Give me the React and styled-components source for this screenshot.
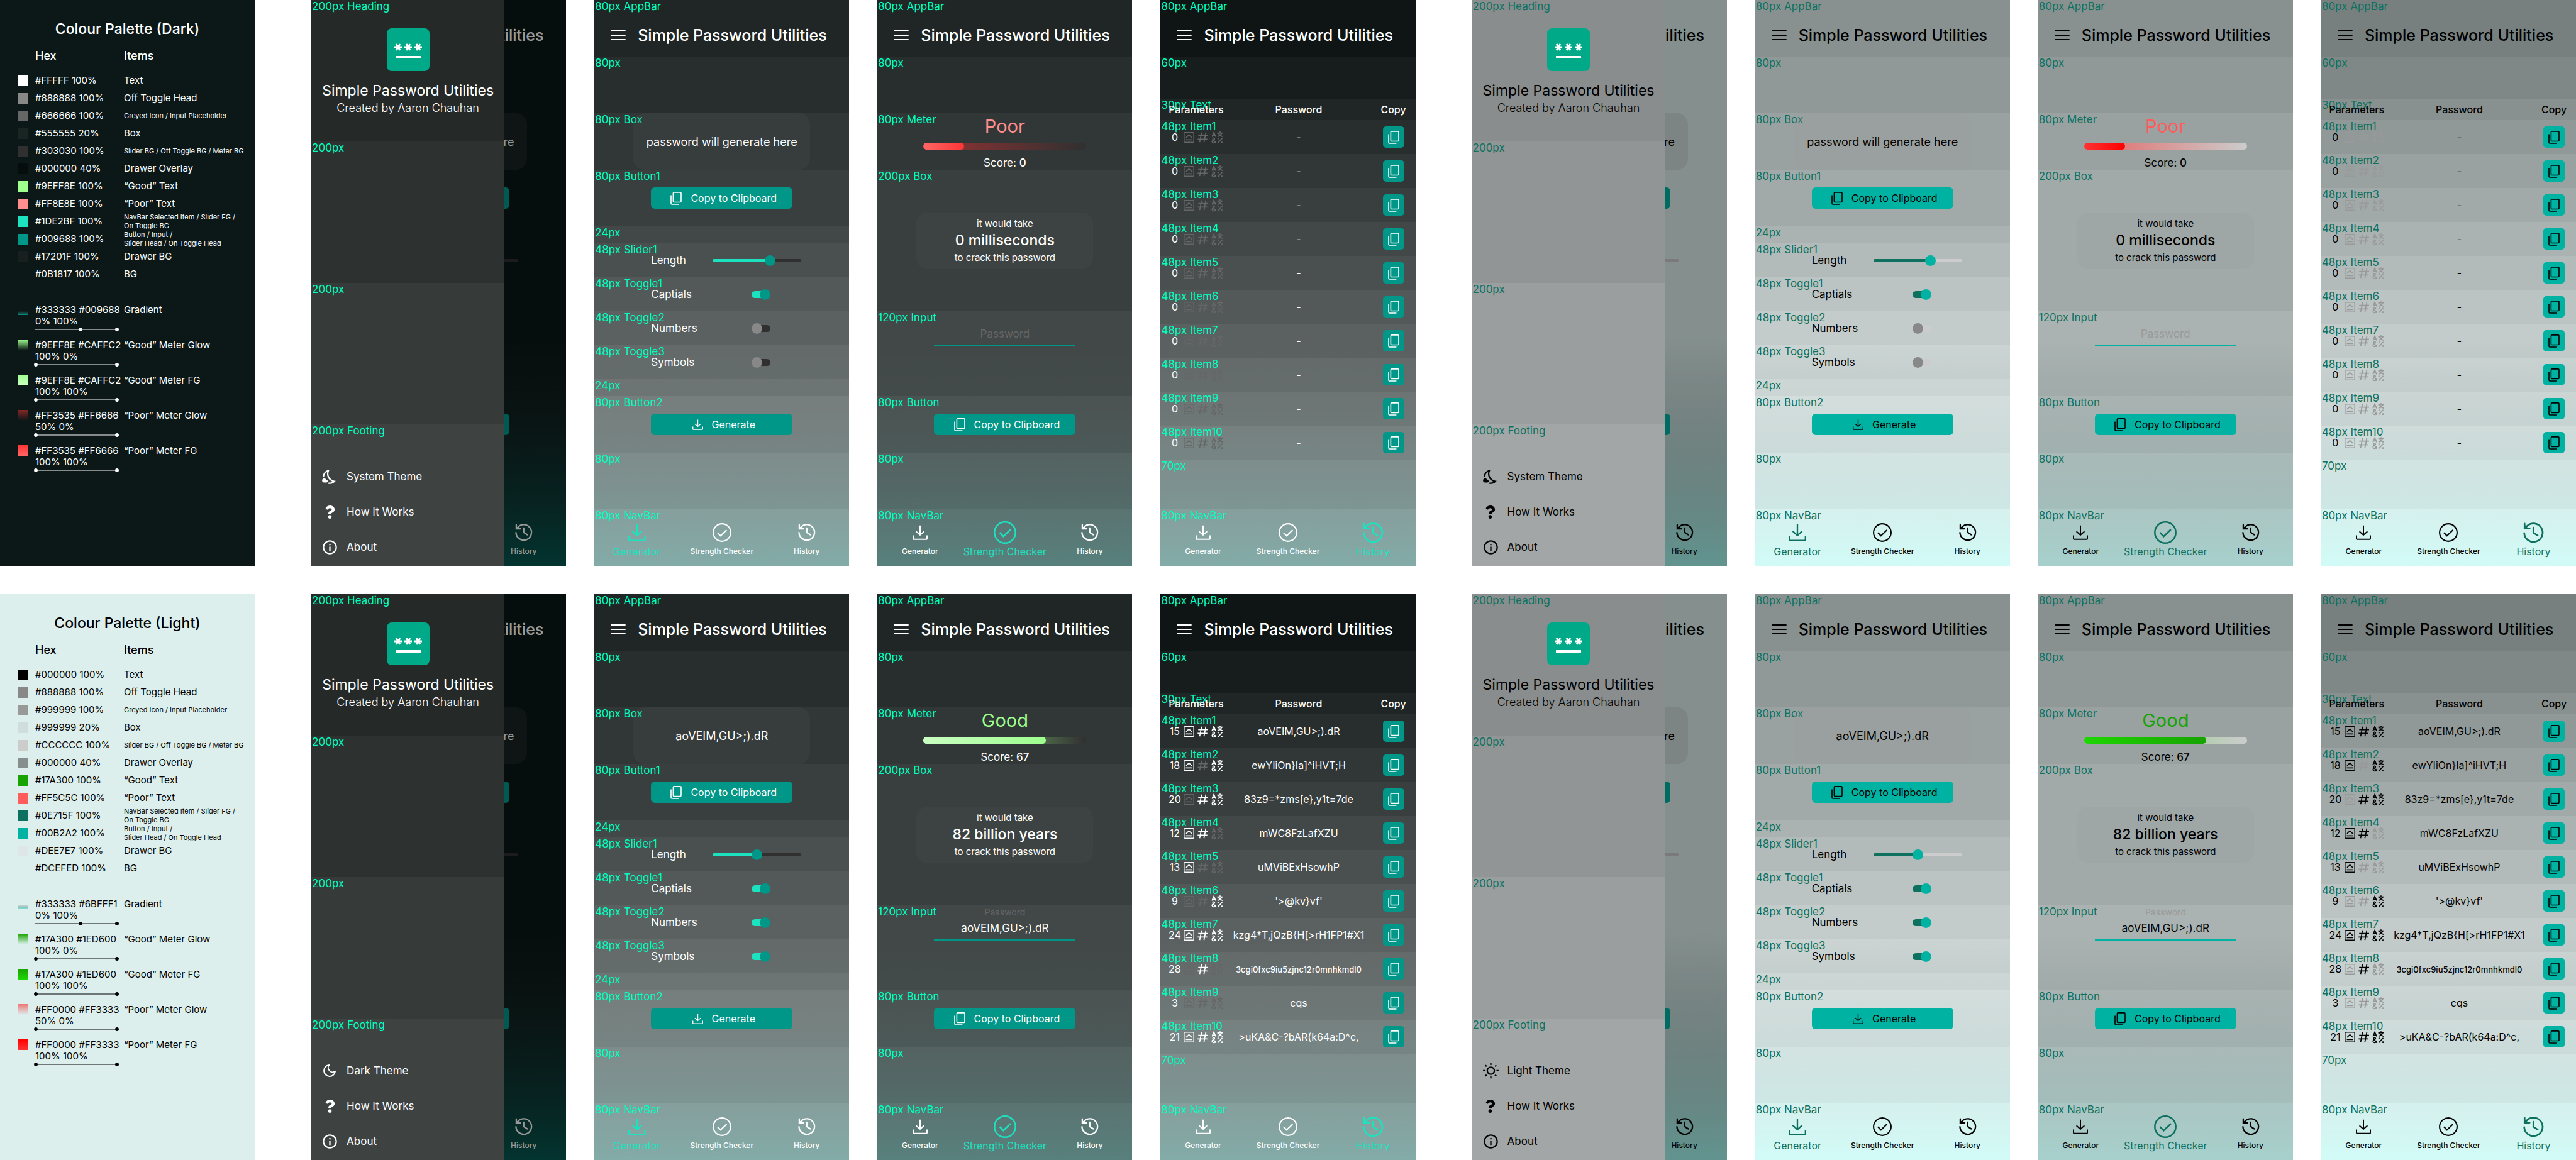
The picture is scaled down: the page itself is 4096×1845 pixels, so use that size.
import React, { useId, useState } from "react";
import styled, { createGlobalStyle, ThemeProvider, css } from "styled-components";
import { MdInfoOutline, MdOutlineNightsStay, MdOutlineWbSunny } from "react-icons/md";
import { FaQuestion } from "react-icons/fa";
import { FiMoon } from "react-icons/fi";

/* ---------- themes ---------- */

const dark = {
  bg: "#0b1817",
  drawer: "#17201f",
  text: "#ffffff",
  offHead: "#888888",
  grey: "#666666",
  box: "rgba(85, 85, 85, 0.2)",
  track: "#303030",
  good: "#9eff8e",
  poor: "#ff8e8e",
  selected: "#1de2bf",
  accent: "#009688",
  note: "#00ffc0",
  fade: [[51, 51, 51], [0, 150, 136]],
  meter: {
    Good: { fg: ["#caffc2", "#9eff8e"], glow: [[158, 255, 142, 1], [202, 255, 194, 0]] },
    Poor: { fg: ["#ff6666", "#ff3535"], glow: [[255, 53, 53, 0.5], [255, 102, 102, 0]] },
  },
};

const light = {
  bg: "#dcefed",
  drawer: "#dee7e7",
  text: "#000000",
  offHead: "#888888",
  grey: "#999999",
  box: "rgba(153, 153, 153, 0.2)",
  track: "#cccccc",
  good: "#17a300",
  poor: "#ff5c5c",
  selected: "#0e715f",
  accent: "#00b2a2",
  note: "#0e715f",
  fade: [[51, 51, 51], [107, 255, 241]],
  meter: {
    Good: { fg: ["#1ed600", "#17a300"], glow: [[23, 163, 0, 1], [30, 214, 0, 0]], soft: [[30, 214, 0, 0.5], [30, 214, 0, 0]] },
    Poor: { fg: ["#ff3333", "#ff0000"], glow: [[255, 0, 0, 0.5], [255, 51, 51, 0]] },
  },
};

/* A vertical fade whose colour and alpha are blended separately. */
const fade = ([from, to], start, strength) => {
  const stops = [];
  for (let i = 0; i <= 10; i += 1) {
    const t = i / 10;
    const rgb = from.map((c, k) => Math.round(c + (to[k] - c) * t));
    stops.push(`rgba(${rgb.join(", ")}, ${(t * strength).toFixed(3)}) ${Math.round((start + (1 - start) * t) * 100)}%`);
  }
  return `linear-gradient(to bottom, ${stops.join(", ")})`;
};

const glow = ([a, b], to = "right") =>
  `linear-gradient(to ${to}, rgba(${a.join(", ")}), rgba(${b.join(", ")}))`;

const GlobalStyle = createGlobalStyle`
  *, *::before, *::after { box-sizing: border-box; }
  body { margin: 0; background: #ffffff; font-family: Inter, Roboto, sans-serif; }
  button, input { font: inherit; color: inherit; }
`;

/* ---------- board ---------- */

const Board = styled.main`
  display: flex;
  flex-direction: column;
  gap: 45px;
`;

const BoardRow = styled.section`
  display: flex;
  gap: 90px;
`;

const Group = styled.div`
  flex: 4 4 135px;
  min-width: 0;
  display: grid;
  grid-template-columns: repeat(4, minmax(0, 1fr));
  gap: 45px;
`;

/* ---------- icons ---------- */

const Glyph = styled.svg`
  display: block;
  flex: none;
  fill: none;
  stroke: currentColor;
  overflow: visible;
`;

const CopyIcon = () => (
  <Glyph width="18" height="21" viewBox="0 0 18 21" strokeWidth="1.6" aria-hidden="true">
    <rect x="4.4" y="0.9" width="12.6" height="15.6" rx="1.2" />
    <path d="M1 5.6V18.6a1.4 1.4 0 0 0 1.4 1.4H13.4" />
  </Glyph>
);

const DownloadIcon = ({ size = 24 }) => (
  <Glyph width={size} height={size} viewBox="0 0 24 24" strokeWidth="2" aria-hidden="true">
    <path d="M12 0.8V16M5.6 10.2L12 16l6.4-5.8" />
    <path d="M1 16.4v4.8a1.6 1.6 0 0 0 1.6 1.6h18.8a1.6 1.6 0 0 0 1.6-1.6v-4.8" />
  </Glyph>
);

const CheckIcon = ({ size = 30 }) => (
  <Glyph width={size} height={size} viewBox="0 0 30 30" strokeWidth="2.1" aria-hidden="true">
    <circle cx="15" cy="15" r="13.9" />
    <path d="M8 15.2l4.8 5 9.6-9.2" />
  </Glyph>
);

const HistoryIcon = ({ size = 27 }) => (
  <Glyph width={size} height={size} viewBox="1.5 1.5 21 21" strokeWidth="1.8" strokeLinecap="round" aria-hidden="true">
    <path d="M2.6 12.5a9.6 9.6 0 1 0 2.6-6.9L3.4 7.4M3 2.8v5h5.2M12.2 6.8v5.4l4.4 2.9" />
  </Glyph>
);

const MenuIcon = () => (
  <Glyph width="24" height="16" viewBox="0 0 24 16" strokeWidth="1.8" strokeLinecap="round" aria-hidden="true">
    <path d="M1 1h22M1 8h22M1 15h22" />
  </Glyph>
);

const CapsIcon = () => (
  <Glyph width="17" height="17" viewBox="0 0 24 24" strokeWidth="2.2" aria-hidden="true">
    <rect x="1.1" y="1.1" width="21.8" height="21.8" rx="1.4" />
    <path d="M5.6 12.6L12 6.6l6.4 6M5 17.5h14" />
  </Glyph>
);

const HashIcon = () => (
  <Glyph width="17" height="17" viewBox="0 0 24 24" strokeWidth="2.4" aria-hidden="true">
    <path d="M9.4 1L5 23M19 1l-4.4 22M1.8 8H24M0.4 16h21.8" />
  </Glyph>
);

const SymbolsIcon = () => (
  <Glyph width="19" height="19" viewBox="0 0 98 102" strokeWidth="9" aria-hidden="true">
    <path d="M4 45L20 9l16 36M10 34h20" />
    <path d="M49 14h48M73 1v12M61 17c5 13 17 23 35 27M86 17c-6 14-19 23-35 27" />
    <path d="M39 100L13 70c-6-8 0-14 6-14 9 0 10 9 3 14C4 78 2 86 7 93c8 10 26 6 31-12" />
    <path d="M54 99l38-41" />
    <circle cx="57" cy="61" r="2" />
    <circle cx="90" cy="95" r="3" />
  </Glyph>
);

const LogoTile = styled.svg`
  display: block;
  width: 68px;
  height: 68px;
`;

const Logo = () => (
  <LogoTile viewBox="0 0 68 68" role="img" aria-label="Simple Password Utilities logo">
    <rect width="68" height="68" rx="8" fill="#00aa88" />
    {[18, 34, 50].map((x) => (
      <path key={x} d={`M${x - 6} 30h12M${x - 3} 25l6 10M${x + 3} 25l-6 10`} stroke="#ffffff" strokeWidth="3" />
    ))}
    <path d="M14 46h40" stroke="#ffffff" strokeWidth="4" />
  </LogoTile>
);

/* ---------- palette ---------- */

const PaletteCard = styled.article`
  flex: 1 1 0;
  min-width: 0;
  min-height: 900px;
  padding-top: 31px;
  background: ${(p) => p.theme.bg};
  color: ${(p) => p.theme.text};
`;

const PaletteTitle = styled.h2`
  margin: 0 0 17px;
  font-size: 23px;
  font-weight: 500;
  line-height: 31px;
  text-align: center;
`;

const PaletteTable = styled.table`
  width: 100%;
  table-layout: fixed;
  border-collapse: collapse;
  font-size: 15px;
  line-height: 18px;
  text-align: left;
  white-space: nowrap;

  th {
    height: 35px;
    padding: 0;
    font-size: 18px;
    font-weight: 500;
    line-height: 20px;
    vertical-align: top;
  }
  td { padding: 0; }
  th:first-child, td:first-child { width: 56px; padding-left: 28px; }
  th:nth-child(2) { width: 141px; }
`;

const SolidRow = styled.tr`
  height: 28px;
`;

const BlendRow = styled.tr`
  height: 56px;
  vertical-align: top;
`;

const Spacer = styled.tr`
  height: 34px;
`;

const Swatch = styled.div`
  width: 17px;
  height: 17px;
  background: ${(p) => p.$fill};
`;

const ItemName = styled.div`
  font-size: ${(p) => (p.$small ? "11px" : "15px")};
  line-height: ${(p) => (p.$small ? "14px" : "18px")};
  white-space: pre-line;
`;

const StopLine = ({ from }) => (
  <Glyph width="133" height="8" viewBox="0 0 133 8" aria-hidden="true">
    <path d="M0 4h133" />
    <circle cx={from} cy="4" r="2.9" fill="currentColor" stroke="none" />
    <circle cx="130" cy="4" r="2.9" fill="currentColor" stroke="none" />
  </Glyph>
);

const darkSolids = [
  ["#FFFFF 100%", "#ffffff", "Text"],
  ["#888888 100%", "#888888", "Off Toggle Head"],
  ["#666666 100%", "#666666", "Greyed Icon / Input Placeholder", true],
  ["#555555 20%", dark.box, "Box"],
  ["#303030 100%", "#303030", "Slider BG / Off Toggle BG / Meter BG", true],
  ["#000000 40%", "rgba(0, 0, 0, 0.4)", "Drawer Overlay"],
  ["#9EFF8E 100%", "#9eff8e", "“Good” Text"],
  ["#FF8E8E 100%", "#ff8e8e", "“Poor” Text"],
  ["#1DE2BF 100%", "#1de2bf", "NavBar Selected Item / Slider FG /\nOn Toggle BG", true],
  ["#009688 100%", "#009688", "Button / Input /\nSlider Head / On Toggle Head", true],
  ["#17201F 100%", "#17201f", "Drawer BG"],
  ["#0B1817 100%", "#0b1817", "BG"],
];

const lightSolids = [
  ["#000000 100%", "#000000", "Text"],
  ["#888888 100%", "#888888", "Off Toggle Head"],
  ["#999999 100%", "#999999", "Greyed Icon / Input Placeholder", true],
  ["#999999 20%", light.box, "Box"],
  ["#CCCCCC 100%", "#cccccc", "Slider BG / Off Toggle BG / Meter BG", true],
  ["#000000 40%", "rgba(0, 0, 0, 0.4)", "Drawer Overlay"],
  ["#17A300 100%", "#17a300", "“Good” Text"],
  ["#FF5C5C 100%", "#ff5c5c", "“Poor” Text"],
  ["#0E715F 100%", "#0e715f", "NavBar Selected Item / Slider FG /\nOn Toggle BG", true],
  ["#00B2A2 100%", "#00b2a2", "Button / Input /\nSlider Head / On Toggle Head", true],
  ["#DEE7E7 100%", "#dee7e7", "Drawer BG"],
  ["#DCEFED 100%", "#dcefed", "BG"],
];

const blends = (theme, names) => [
  [names[0], "0% 100%", fade(theme.fade, 0.6, 1), "Gradient", 72],
  [names[1], "100% 0%", glow(theme.meter.Good.glow, "bottom"), "“Good” Meter Glow", 1],
  [names[1], "100% 100%", `linear-gradient(to top, ${theme.meter.Good.fg.join(", ")})`, "“Good” Meter FG", 1],
  [names[2], "50% 0%", glow(theme.meter.Poor.glow, "bottom"), "“Poor” Meter Glow", 1],
  [names[2], "100% 100%", `linear-gradient(to top, ${theme.meter.Poor.fg.join(", ")})`, "“Poor” Meter FG", 1],
];

const darkBlends = blends(dark, ["#333333 #009688", "#9EFF8E #CAFFC2", "#FF3535 #FF6666"]);
const lightBlends = blends(light, ["#333333 #6BFFF1", "#17A300 #1ED600", "#FF0000 #FF3333"]);

const Palette = ({ title, solids, gradients }) => (
  <PaletteCard>
    <PaletteTitle>{title}</PaletteTitle>
    <PaletteTable>
      <thead>
        <tr><th aria-label="Swatch" /><th>Hex</th><th>Items</th></tr>
      </thead>
      <tbody>
        {solids.map(([hex, fill, name, small]) => (
          <SolidRow key={name}>
            <td><Swatch $fill={fill} /></td>
            <td>{hex}</td>
            <td><ItemName $small={small}>{name}</ItemName></td>
          </SolidRow>
        ))}
        <Spacer><td colSpan={3} /></Spacer>
        {gradients.map(([hex, alpha, fill, name, from]) => (
          <BlendRow key={name}>
            <td><Swatch $fill={fill} /></td>
            <td>{hex}<br />{alpha}<StopLine from={from} /></td>
            <td><ItemName>{name}</ItemName></td>
          </BlendRow>
        ))}
      </tbody>
    </PaletteTable>
  </PaletteCard>
);

/* ---------- screen and bands ---------- */

const Screen = styled.article`
  position: relative;
  min-width: 0;
  overflow: hidden;
  display: flex;
  flex-direction: column;
  background: ${(p) => fade(p.theme.fade, 0.6, 0.5)}, ${(p) => p.theme.bg};
  color: ${(p) => p.theme.text};
`;

const tint = css`
  background: ${(p) => (p.$tone === undefined ? "none" : `rgba(${p.$tone * 17}, ${p.$tone * 17}, ${p.$tone * 17}, 0.5)`)};
`;

const BandBox = styled.section`
  isolation: isolate;
  position: relative;
  flex: none;
  display: flex;
  flex-direction: column;
  align-items: center;
  justify-content: center;
  min-height: ${(p) => p.$height}px;
  ${tint}
`;

const Note = styled.span`
  position: absolute;
  z-index: -1;
  top: 0;
  left: 1px;
  font-size: 17px;
  font-weight: 400;
  line-height: 20px;
  white-space: nowrap;
  color: ${(p) => p.theme.note};
`;

const Band = ({ size, tone, note, children, as }) => (
  <BandBox as={as} $height={size} $tone={tone}>
    {tone !== undefined && <Note>{note}</Note>}
    {children}
  </BandBox>
);

/* ---------- app bar and nav bar ---------- */

const BarRow = styled.div`
  align-self: stretch;
  display: flex;
  align-items: center;
  gap: 19px;
  padding: 22px 26px 0;
`;

const MenuButton = styled.button`
  display: block;
  padding: 0;
  border: 0;
  background: none;
`;

const BarTitle = styled.h1`
  margin: 0;
  font-size: 25px;
  font-weight: 500;
  line-height: 30px;
  white-space: nowrap;
`;

const AppBar = ({ tone }) => (
  <Band as="header" size={90} tone={tone} note="80px AppBar">
    <BarRow>
      <MenuButton type="button" aria-label="Open menu"><MenuIcon /></MenuButton>
      <BarTitle>Simple Password Utilities</BarTitle>
    </BarRow>
  </Band>
);

const NavList = styled.nav`
  align-self: stretch;
  display: grid;
  grid-template-columns: repeat(3, minmax(0, 1fr));
  padding-top: 3px;
`;

const NavLink = styled.a`
  display: flex;
  flex-direction: column;
  align-items: center;
  color: ${(p) => (p.$on ? p.theme.selected : "inherit")};
  font-size: ${(p) => (p.$on ? "16px" : "12px")};
  font-weight: ${(p) => (p.$on ? 400 : 500)};
  line-height: 20px;
  text-decoration: none;
  white-space: nowrap;
`;

const NavIcon = styled.span`
  display: grid;
  place-items: center;
  height: 41px;
`;

const navItems = [
  ["Generator", DownloadIcon, 24, 28],
  ["Strength Checker", CheckIcon, 30, 36],
  ["History", HistoryIcon, 27, 32],
];

/* Items that lie under an open drawer keep their column but are not rendered. */
const NavBar = ({ tone, active, covered = 0 }) => (
  <Band as="footer" size={90} tone={tone} note="80px NavBar">
    <NavList>
      {navItems.map(([name, Icon, size, big], i) => {
        const on = name === active;
        if (i < covered) return <span key={name} />;
        return (
          <NavLink key={name} href={`#${name.toLowerCase().replace(" ", "-")}`} $on={on}>
            <NavIcon><Icon size={on ? big : size} /></NavIcon>
            {name}
          </NavLink>
        );
      })}
    </NavList>
  </Band>
);

/* ---------- shared controls ---------- */

const InfoBox = styled.div`
  width: 281px;
  max-width: 100%;
  min-height: 90px;
  display: flex;
  flex-direction: column;
  align-items: center;
  justify-content: center;
  border-radius: 18px;
  background: ${(p) => p.theme.box};
  font-size: ${(p) => (p.$small ? "15px" : "18px")};
  line-height: 27px;
  white-space: nowrap;

  strong { font-size: 23px; font-weight: 500; }
`;

const ActionButton = styled.button`
  width: 225px;
  max-width: 100%;
  height: 34px;
  display: flex;
  align-items: center;
  justify-content: center;
  gap: 14px;
  padding: 0 0 0 6px;
  border: 0;
  border-radius: 6px;
  background: ${(p) => p.theme.accent};
  font-size: 16px;
  line-height: 20px;
`;

/* ---------- generator ---------- */

const Setting = styled.div`
  align-self: stretch;
  display: flex;
  align-items: center;
  justify-content: space-between;
  padding-left: 90px;
  padding-right: ${(p) => (p.$wide ? "76px" : "125px")};
  font-size: 17px;
  line-height: 20px;
`;

const Slider = styled.input`
  appearance: none;
  width: 141px;
  height: 5px;
  margin: 0;
  border-radius: 3px;
  background: linear-gradient(
    to right,
    ${(p) => p.theme.selected} ${(p) => p.$share}%,
    ${(p) => p.theme.track} ${(p) => p.$share}%
  );

  &::-webkit-slider-thumb {
    appearance: none;
    width: 17px;
    height: 17px;
    border-radius: 50%;
    background: ${(p) => p.theme.accent};
  }
`;

const Toggle = styled.input`
  appearance: none;
  display: flex;
  align-items: center;
  width: 30px;
  height: 11px;
  margin: 0;
  border-radius: 6px;
  background: ${(p) => p.theme.track};

  &::before {
    content: "";
    width: 17px;
    height: 17px;
    border-radius: 50%;
    background: ${(p) => p.theme.offHead};
  }
  &:checked { justify-content: flex-end; background: ${(p) => p.theme.selected}; }
  &:checked::before { background: ${(p) => p.theme.accent}; }
`;

const LengthSetting = ({ start }) => {
  const id = useId();
  const [length, setLength] = useState(start);
  return (
    <Setting $wide>
      <label htmlFor={id}>Length</label>
      <Slider
        id={id}
        type="range"
        min="0"
        max="30"
        value={length}
        $share={Math.round((length / 30) * 100)}
        onChange={(e) => setLength(Number(e.target.value))}
      />
    </Setting>
  );
};

const ToggleSetting = ({ name, on }) => {
  const id = useId();
  return (
    <Setting>
      <label htmlFor={id}>{name}</label>
      <Toggle id={id} type="checkbox" defaultChecked={on} />
    </Setting>
  );
};

const Generator = ({ filled, plain, active, children }) => {
  const tone = (n) => (plain ? undefined : n);
  return (
    <Screen>
      <AppBar tone={tone(3)} />
      <Band size={90} tone={tone(4)} note="80px" />
      <Band size={90} tone={tone(5)} note="80px Box">
        <InfoBox>{filled ? "aoVEIM,GU>;).dR" : "password will generate here"}</InfoBox>
      </Band>
      <Band size={90} tone={tone(6)} note="80px Button1">
        <ActionButton type="button"><CopyIcon />Copy to Clipboard</ActionButton>
      </Band>
      <Band size={27} tone={tone(7)} note="24px" />
      <Band size={54} tone={tone(8)} note="48px Slider1"><LengthSetting start={filled ? 15 : 20} /></Band>
      <Band size={54} tone={tone(9)} note="48px Toggle1"><ToggleSetting name="Captials" on /></Band>
      <Band size={54} tone={tone(10)} note="48px Toggle2"><ToggleSetting name="Numbers" on={filled} /></Band>
      <Band size={54} tone={tone(11)} note="48px Toggle3"><ToggleSetting name="Symbols" on={filled} /></Band>
      <Band size={27} tone={tone(12)} note="24px" />
      <Band size={90} tone={tone(13)} note="80px Button2">
        <ActionButton type="button"><DownloadIcon size={17} />Generate</ActionButton>
      </Band>
      <Band size={90} tone={tone(14)} note="80px" />
      <NavBar tone={tone(15)} active={active} covered={plain ? 2 : 0} />
      {children}
    </Screen>
  );
};

/* ---------- drawer ---------- */

const Overlay = styled.div`
  position: absolute;
  inset: 0;
  background: rgba(0, 0, 0, 0.4);
`;

const DrawerPanel = styled.aside`
  position: absolute;
  top: 0;
  bottom: 0;
  left: 0;
  width: 307px;
  display: flex;
  flex-direction: column;
  background: ${(p) => p.theme.drawer};
`;

const DrawerHead = styled.div`
  display: flex;
  flex-direction: column;
  align-items: center;
  padding-top: 5px;
  white-space: nowrap;
`;

const DrawerTitle = styled.h2`
  margin: 17px 0 0;
  font-size: 23px;
  font-weight: 400;
  line-height: 28px;
`;

const DrawerCredit = styled.p`
  margin: 0;
  font-size: 18px;
  font-weight: 300;
  line-height: 28px;
`;

const DrawerMenu = styled.ul`
  align-self: stretch;
  margin: 0;
  padding: 53px 0 0 16px;
  list-style: none;
`;

const DrawerLink = styled.a`
  display: flex;
  align-items: center;
  gap: 14px;
  height: 56px;
  color: inherit;
  font-size: 17px;
  line-height: 20px;
  text-decoration: none;
`;

const DrawerIcon = styled.span`
  width: 26px;
  display: grid;
  place-items: center;
`;

const themeIcons = {
  "System Theme": <MdOutlineNightsStay size={27} />,
  "Dark Theme": <FiMoon size={24} />,
  "Light Theme": <MdOutlineWbSunny size={27} />,
};

const DrawerScreen = ({ themeName }) => (
  <Generator plain>
    <Overlay />
    <DrawerPanel>
      <Band size={225} tone={3} note="200px Heading">
        <DrawerHead>
          <Logo />
          <DrawerTitle>Simple Password Utilities</DrawerTitle>
          <DrawerCredit>Created by Aaron Chauhan</DrawerCredit>
        </DrawerHead>
      </Band>
      <Band size={225} tone={4} note="200px" />
      <Band size={225} tone={5} note="200px" />
      <Band size={225} tone={6} note="200px Footing">
        <DrawerMenu>
          <li><DrawerLink href="#theme"><DrawerIcon>{themeIcons[themeName]}</DrawerIcon>{themeName}</DrawerLink></li>
          <li><DrawerLink href="#how"><DrawerIcon><FaQuestion size={21} /></DrawerIcon>How It Works</DrawerLink></li>
          <li><DrawerLink href="#about"><DrawerIcon><MdInfoOutline size={27} /></DrawerIcon>About</DrawerLink></li>
        </DrawerMenu>
      </Band>
    </DrawerPanel>
  </Generator>
);

/* ---------- strength checker ---------- */

const MeterBlock = styled.div`
  display: flex;
  flex-direction: column;
  align-items: center;
  width: 259px;
  max-width: 100%;
  padding-top: 3px;
`;

const Verdict = styled.div`
  margin-bottom: 8px;
  color: ${(p) => (p.$good ? p.theme.good : p.theme.poor)};
  font-size: 29px;
  line-height: 36px;
`;

const MeterTrack = styled.div`
  width: 100%;
  height: 11px;
  margin-bottom: 10px;
  overflow: hidden;
  border-radius: 6px;
  background: ${(p) => glow(p.theme.meter[p.$level].soft || p.theme.meter[p.$level].glow)}, ${(p) => p.theme.track};
`;

const MeterFill = styled.div`
  width: ${(p) => p.$share}%;
  height: 100%;
  border-radius: 6px;
  background: linear-gradient(to right, ${(p) => p.theme.meter[p.$level].fg.join(", ")});
`;

const Score = styled.div`
  font-size: 17px;
  line-height: 22px;

  strong { font-weight: 500; }
`;

const Field = styled.div`
  align-self: stretch;
  flex: 1;
  display: flex;
  flex-direction: column;
  align-items: center;
`;

const FieldLabel = styled.label`
  visibility: ${(p) => (p.$shown ? "visible" : "hidden")};
  color: ${(p) => p.theme.grey};
  font-size: 14px;
  line-height: 22px;
`;

const FieldInput = styled.input`
  width: 225px;
  max-width: 100%;
  height: 34px;
  padding: 0 0 4px;
  border: 0;
  border-bottom: 2px solid ${(p) => p.theme.accent};
  border-radius: 0;
  background: none;
  font-size: 17px;
  text-align: center;

  &::placeholder { color: ${(p) => p.theme.grey}; opacity: 1; }
`;

const PasswordField = ({ start }) => {
  const id = useId();
  const [value, setValue] = useState(start);
  return (
    <Field>
      <FieldLabel htmlFor={id} $shown={value !== ""}>Password</FieldLabel>
      <FieldInput id={id} type="text" placeholder="Password" value={value} onChange={(e) => setValue(e.target.value)} />
    </Field>
  );
};

const Strength = ({ filled }) => {
  const level = filled ? "Good" : "Poor";
  return (
    <Screen>
      <AppBar tone={3} />
      <Band size={90} tone={4} note="80px" />
      <Band size={90} tone={5} note="80px Meter">
        <MeterBlock>
          <Verdict $good={filled}>{level}</Verdict>
          <MeterTrack $level={level}><MeterFill $level={level} $share={filled ? 75 : 25} /></MeterTrack>
          <Score>Score: <strong>{filled ? 67 : 0}</strong></Score>
        </MeterBlock>
      </Band>
      <Band size={225} tone={6} note="200px Box">
        <InfoBox $small>
          <span>it would take</span>
          <strong>{filled ? "82 billion years" : "0 milliseconds"}</strong>
          <span>to crack this password</span>
        </InfoBox>
      </Band>
      <Band size={135} tone={7} note="120px Input"><PasswordField start={filled ? "aoVEIM,GU>;).dR" : ""} /></Band>
      <Band size={90} tone={8} note="80px Button">
        <ActionButton type="button"><CopyIcon />Copy to Clipboard</ActionButton>
      </Band>
      <Band size={90} tone={9} note="80px" />
      <NavBar tone={10} active="Strength Checker" />
    </Screen>
  );
};

/* ---------- history ---------- */

const HistoryTable = styled.table`
  width: 100%;
  table-layout: fixed;
  border-collapse: collapse;
  font-size: 16px;
  line-height: 20px;
  text-align: center;
  white-space: nowrap;

  th, td { padding: 0; font-weight: 400; }
  th { font-weight: 500; }
  th:first-child { width: 104px; }
  th:last-child { width: 70px; }
`;

const HistoryRow = styled.tr`
  height: ${(p) => p.$height}px;
  ${tint}

  > :first-child { isolation: isolate; position: relative; padding-left: 9px; }
`;

const Params = styled.div`
  display: flex;
  align-items: center;
  gap: 5px;
`;

const Count = styled.span`
  width: 27px;
  margin-right: -4px;
`;

const Flag = styled.span`
  color: ${(p) => (p.$on ? "inherit" : p.theme.grey)};
`;

const Entry = styled.span`
  font-size: ${(p) => (p.$long ? "13px" : "16px")};
  font-weight: ${(p) => (p.$long ? 500 : 400)};
`;

const CopyCell = styled.td`
  > button { margin: 0 auto; }
`;

const CopyButton = styled.button`
  display: grid;
  place-items: center;
  width: 34px;
  height: 34px;
  padding: 0;
  border: 0;
  border-radius: 5px;
  background: ${(p) => p.theme.accent};
`;

const filledEntries = [
  [15, "111", "aoVEIM,GU>;).dR"],
  [18, "101", "ewYIiOn}Ia]^iHVT;H"],
  [20, "011", "83z9=*zms[e},y1t=7de"],
  [12, "110", "mWC8FzLafXZU"],
  [13, "100", "uMViBExHsowhP"],
  [9, "001", "'>@kv}vf'"],
  [24, "111", "kzg4*T,jQzB{H[>rH1FP1#X1"],
  [28, "010", "3cgi0fxc9iu5zjnc12r0mnhkmdl0"],
  [3, "000", "cqs"],
  [21, "111", ">uKA&C-?bAR(k64a:D^c,"],
];
const emptyEntries = filledEntries.map(() => [0, "000", "-"]);

const History = ({ filled }) => (
  <Screen>
    <AppBar tone={1} />
    <Band size={67} tone={2} note="60px" />
    <HistoryTable>
      <thead>
        <HistoryRow $height={34} $tone={3}>
          <th><Note>30px Text</Note>Parameters</th>
          <th>Password</th>
          <th>Copy</th>
        </HistoryRow>
      </thead>
      <tbody>
        {(filled ? filledEntries : emptyEntries).map(([count, flags, entry], i) => (
          <HistoryRow key={i} $height={54} $tone={4 + i}>
            <td>
              <Note>48px Item{i + 1}</Note>
              <Params>
                <Count>{count}</Count>
                <Flag $on={flags[0] === "1"}><CapsIcon /></Flag>
                <Flag $on={flags[1] === "1"}><HashIcon /></Flag>
                <Flag $on={flags[2] === "1"}><SymbolsIcon /></Flag>
              </Params>
            </td>
            <td><Entry $long={entry.length > 24}>{entry}</Entry></td>
            <CopyCell><CopyButton type="button" aria-label={`Copy item ${i + 1}`}><CopyIcon /></CopyButton></CopyCell>
          </HistoryRow>
        ))}
      </tbody>
    </HistoryTable>
    <Band size={79} tone={14} note="70px" />
    <NavBar tone={15} active="History" />
  </Screen>
);

/* ---------- page ---------- */

const ScreenSet = ({ theme, filled, themeName }) => (
  <ThemeProvider theme={theme}>
    <Group>
      <DrawerScreen themeName={themeName} />
      <Generator filled={filled} active="Generator" />
      <Strength filled={filled} />
      <History filled={filled} />
    </Group>
  </ThemeProvider>
);

export default function App() {
  return (
    <Board>
      <GlobalStyle />
      <BoardRow>
        <ThemeProvider theme={dark}>
          <Palette title="Colour Palette (Dark)" solids={darkSolids} gradients={darkBlends} />
        </ThemeProvider>
        <ScreenSet theme={dark} filled={false} themeName="System Theme" />
        <ScreenSet theme={light} filled={false} themeName="System Theme" />
      </BoardRow>
      <BoardRow>
        <ThemeProvider theme={light}>
          <Palette title="Colour Palette (Light)" solids={lightSolids} gradients={lightBlends} />
        </ThemeProvider>
        <ScreenSet theme={dark} filled themeName="Dark Theme" />
        <ScreenSet theme={light} filled themeName="Light Theme" />
      </BoardRow>
    </Board>
  );
}
